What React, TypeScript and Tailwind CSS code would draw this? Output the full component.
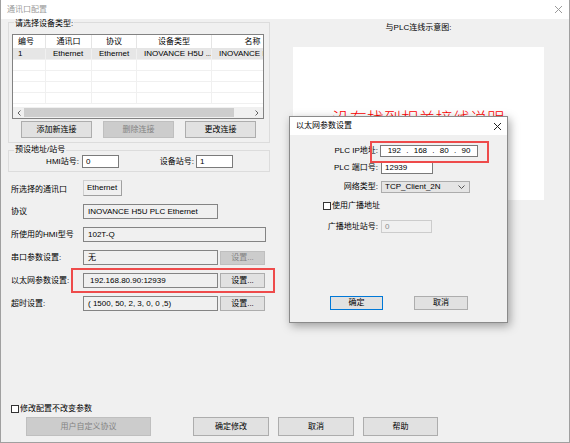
import type {ReactNode} from 'react'

const FONT = "font-['Liberation_Sans','Noto_Sans_CJK_SC',sans-serif]"

function Button({children, className = '', disabled = false, focused = false}: {children: ReactNode; className?: string; disabled?: boolean; focused?: boolean}) {
  const tone = disabled
    ? 'bg-[#cccccc] border-[#bfbfbf] text-[#838383]'
    : focused
      ? 'bg-[#e1e1e1] border-[#0078d7] text-black'
      : 'bg-[#e1e1e1] border-[#adadad] text-black'
  return (
    <button type="button" className={`flex shrink-0 items-center justify-center border text-[8px] leading-none ${tone} ${className}`}>
      {children}
    </button>
  )
}

function ReadBox({children, className = ''}: {children: ReactNode; className?: string}) {
  return (
    <div className={`flex h-[15px] shrink-0 items-center border border-[#848484] bg-[#f0f0f0] pl-[4px] text-[8px] whitespace-nowrap ${className}`}>
      {children}
    </div>
  )
}

function CloseIcon({color}: {color: string}) {
  return (
    <svg width="9" height="9" viewBox="0 0 9 9">
      <path d="M1 1L8 8M8 1L1 8" stroke={color} strokeWidth="1" />
    </svg>
  )
}

function Checkbox() {
  return <span className="inline-block h-[8px] w-[8px] shrink-0 border border-[#333333] bg-white" />
}

const headers = ['编号', '通讯口', '协议', '设备类型', '名称']
const row = ['1', 'Ethernet', 'Ethernet', 'INOVANCE H5U ...', 'INOVANCE H5U PLC Ethernet']

function DeviceTable() {
  return (
    <div className="ml-[3px] mt-[7px] h-[85px] w-[252px] overflow-hidden border border-[#828282] bg-white flex flex-col">
      <div className="grid h-[14px] shrink-0 grid-cols-[33px_46px_45px_75px_82px] border-b border-[#e5e5e5] text-[8px]">
        {headers.map((h, i) => (
          <div key={h} className={`flex items-center border-r border-[#e5e5e5] whitespace-nowrap ${i === 0 ? 'pl-[5px]' : 'justify-center'}`}>
            {h}
          </div>
        ))}
      </div>
      <div className="grid h-[11px] shrink-0 grid-cols-[33px_46px_45px_75px_82px] border-b border-[#f0f0f0] bg-[#e6e6e6] text-[8px]">
        {row.map((c, i) => (
          <div key={i} className={`flex items-center overflow-hidden whitespace-nowrap border-r border-[#f0f0f0] ${i === 0 ? 'pl-[5px]' : 'pl-[7px]'}`}>
            {c}
          </div>
        ))}
      </div>
      {[0, 1, 2, 3].map((r) => (
        <div key={r} className="grid h-[11px] shrink-0 grid-cols-[33px_46px_45px_75px_82px] border-b border-[#f0f0f0]">
          {headers.map((h) => (
            <div key={h} className="border-r border-[#f0f0f0]" />
          ))}
        </div>
      ))}
      <div className="mt-auto flex h-[11px] shrink-0 items-center bg-[#f0f0f0]">
        <div className="flex w-[11px] justify-center">
          <svg width="4" height="6" viewBox="0 0 4 6"><path d="M3.5 0.5L1 3L3.5 5.5" stroke="#606060" fill="none" /></svg>
        </div>
        <div className="h-[9px] w-[210px] bg-[#cdcdcd]" />
        <div className="flex flex-1 justify-end pr-[4px]">
          <svg width="4" height="6" viewBox="0 0 4 6"><path d="M0.5 0.5L3 3L0.5 5.5" stroke="#606060" fill="none" /></svg>
        </div>
      </div>
    </div>
  )
}

function EthernetDialog() {
  return (
    <div className="absolute left-[288px] top-[116px] flex h-[207px] w-[219px] flex-col border border-[#8a8a8a] bg-[#f0f0f0] shadow-[2px_3px_9px_rgba(0,0,0,0.35)]">
      <div className="flex h-[18px] shrink-0 items-center justify-between bg-white pl-[6px] pr-[5px] text-[8px]">
        <span>以太网参数设置</span>
        <CloseIcon color="#222222" />
      </div>
      <div className="flex flex-1 flex-col text-[8px]">
        <div className="mt-[10px] flex h-[12px] items-center">
          <span className="w-[88px] text-right">PLC IP地址:</span>
          <div className="ml-[2px] flex h-[12px] w-[98px] items-center justify-around border border-[#7a7a7a] bg-white px-[4px]">
            <span>192</span><span>.</span><span>168</span><span>.</span><span>80</span><span>.</span><span>90</span>
          </div>
        </div>
        <div className="mt-[5px] flex h-[12px] items-center">
          <span className="w-[88px] text-right">PLC 端口号:</span>
          <div className="ml-[3px] flex h-[12px] w-[52px] items-center border border-[#7a7a7a] bg-white pl-[3px]">12939</div>
        </div>
        <div className="mt-[7px] flex h-[12px] items-center">
          <span className="w-[88px] text-right">网络类型:</span>
          <div className="ml-[3px] flex h-[12px] w-[89px] items-center justify-between border border-[#acacac] bg-[#e5e5e5] pl-[3px] pr-[4px]">
            <span>TCP_Client_2N</span>
            <svg width="7" height="4" viewBox="0 0 7 4"><path d="M0.5 0.5L3.5 3.5L6.5 0.5" stroke="#555555" fill="none" /></svg>
          </div>
        </div>
        <div className="mt-[8px] flex h-[9px] items-center gap-[1px] pl-[33px]">
          <Checkbox />
          <span>使用广播地址</span>
        </div>
        <div className="mt-[10px] flex h-[13px] items-center">
          <span className="w-[88px] text-right">广播地址站号:</span>
          <div className="ml-[3px] flex h-[13px] w-[51px] items-center border border-[#cccccc] bg-[#f0f0f0] pl-[3px] text-[#8d8d8d]">0</div>
        </div>
        <div className="mt-auto mb-[12px] flex pl-[40px]">
          <Button focused className="h-[14px] w-[53px]">确定</Button>
          <Button className="ml-[31px] h-[14px] w-[54px]">取消</Button>
        </div>
      </div>
    </div>
  )
}

export default function App() {
  return (
    <div className={`relative flex h-[443px] w-[570px] flex-col overflow-hidden border-x border-b border-[#a0a0a0] bg-[#f0f0f0] text-black ${FONT}`}>
      <div className="flex h-[19px] shrink-0 items-center justify-between bg-white pl-[6px] pr-[6px] text-[8px] text-[#9a9a9a]">
        <span>通讯口配置</span>
        <CloseIcon color="#9a9a9a" />
      </div>

      <div className="flex flex-1">
        {/* left: device list and port settings */}
        <div className="w-[270px] shrink-0 pl-[7px] text-[8px]">
          <fieldset className="-mt-[2px] w-[262px] border border-[#dcdcdc] pb-[4px]">
            <legend className="ml-[5px] h-[10px] px-[1px] leading-[10px]">
              <span className="relative top-[2px]">请选择设备类型:</span>
            </legend>
            <DeviceTable />
            <div className="mt-[2px] flex gap-[11px] pl-[12px]">
              <Button className="h-[17px] w-[71px]">添加新连接</Button>
              <Button disabled className="h-[17px] w-[71px]">删除连接</Button>
              <Button className="h-[17px] w-[71px]">更改连接</Button>
            </div>
          </fieldset>

          <fieldset className="mt-[2px] w-[262px] border border-[#dcdcdc] pb-[3px]">
            <legend className="ml-[5px] h-[10px] px-[1px] leading-[10px]">预设地址/站号</legend>
            <div className="flex h-[13px] items-center">
              <span className="w-[70px] text-right">HMI站号:</span>
              <div className="ml-[3px] flex h-[13px] w-[37px] items-center border border-[#7a7a7a] bg-white pl-[3px]">0</div>
              <span className="w-[75px] text-right">设备站号:</span>
              <div className="ml-[2px] flex h-[13px] w-[37px] items-center border border-[#7a7a7a] bg-white pl-[3px]">1</div>
            </div>
          </fieldset>

          <div className="mt-[8px] flex h-[16px] items-center">
            <span className="w-[75px] pl-[3px] pt-[4px]">所选择的通讯口</span>
            <div className="flex h-[16px] w-[39px] items-start border border-[#d0d0d0] border-b-[#a0a0a0] border-r-[#a0a0a0] pl-[3px] pt-[1px]">Ethernet</div>
          </div>
          <div className="mt-[8px] flex items-center">
            <span className="w-[75px] pl-[3px]">协议</span>
            <ReadBox className="w-[135px]">INOVANCE H5U PLC Ethernet</ReadBox>
          </div>
          <div className="mt-[8px] flex items-center">
            <span className="w-[75px] pl-[3px]">所使用的HMI型号</span>
            <ReadBox className="w-[183px]">102T-Q</ReadBox>
          </div>
          <div className="mt-[8px] flex items-center">
            <span className="w-[75px] pl-[3px]">串口参数设置:</span>
            <ReadBox className="w-[135px]">无</ReadBox>
            <Button disabled className="ml-[2px] h-[14px] w-[45px]">设置...</Button>
          </div>
          <div className="mt-[8px] flex items-center">
            <span className="w-[75px] pl-[3px]">以太网参数设置:</span>
            <ReadBox className="w-[135px] pl-[6px]">192.168.80.90:12939</ReadBox>
            <Button className="ml-[2px] h-[15px] w-[45px]">设置...</Button>
          </div>
          <div className="mt-[8px] flex items-center">
            <span className="w-[75px] pl-[3px]">超时设置:</span>
            <ReadBox className="w-[135px]">( 1500, 50, 2, 3, 0, 0 ,5)</ReadBox>
            <Button className="ml-[2px] h-[15px] w-[45px]">设置...</Button>
          </div>
        </div>

        {/* right: wiring diagram preview */}
        <div className="flex-1 pl-[22px]">
          <div className="mt-[4px] w-[251px] text-center text-[8px] leading-[10px]">与PLC连线示意图:</div>
          <div className="mt-[14px] h-[153px] w-[251px] bg-white pt-[64px] text-center text-[17px] font-light leading-[17px] tracking-[0.2px] text-[#ff0000]">
            没有找到相关接线说明
          </div>
        </div>
      </div>

      <div className="shrink-0 pb-[6px] text-[8px]">
        <div className="flex h-[9px] items-center gap-[1px] pl-[10px]">
          <Checkbox />
          <span>修改配置不改变参数</span>
        </div>
        <div className="mt-[4px] flex pl-[25px]">
          <Button disabled className="h-[19px] w-[125px]">用户自定义协议</Button>
          <Button className="ml-[42px] h-[19px] w-[76px]">确定修改</Button>
          <Button className="ml-[9px] h-[19px] w-[76px]">取消</Button>
          <Button className="ml-[9px] h-[19px] w-[75px]">帮助</Button>
        </div>
      </div>

      <EthernetDialog />

      {/* annotation frames */}
      <div className="pointer-events-none absolute left-[70px] top-[268px] h-[25px] w-[204px] border-2 border-[#ee4b4b]" />
      <div className="pointer-events-none absolute left-[369px] top-[141px] h-[22px] w-[119px] border-2 border-[#ee4b4b]" />
    </div>
  )
}
